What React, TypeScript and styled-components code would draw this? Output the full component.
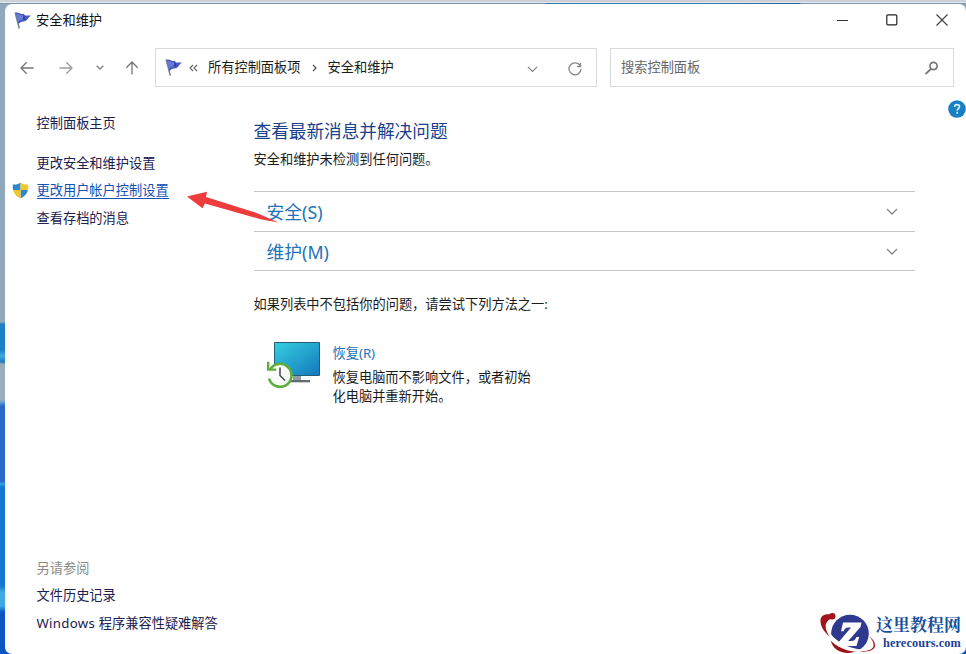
import React from "react";
import styled, { createGlobalStyle } from "styled-components";

const GlobalStyle = createGlobalStyle`
  * { box-sizing: border-box; }
  body { margin: 0; overflow: hidden; }
`;

const Desktop = styled.div`
  width: 966px;
  height: 654px;
  padding: 4px 0 0 5px;
  overflow: hidden;
  font: 13.22px/20px "Noto Sans", "Noto Sans CJK SC", sans-serif;
  color: #1b1b1b;
  background:
    linear-gradient(#cdd0d8 0 2px, #e4e9ef 2px 3px, transparent 3px) 0 0 / 100% 3px no-repeat,
    linear-gradient(90deg, #7f95a8 0 545px, #2f7fae 545px 700px, #2a5f9a 800px, #8497ad 801px) 0 3px / 100% 1px no-repeat,
    linear-gradient(
      #8fa8bd 0 200px, #93a9b8 322px, #1e7fc4 324px 350px, #43aadb 356px, #1f79c0 362px,
      #9aadb9 364px 400px, #63a3d0 402px, #2c66c8 406px 481px, #35a0e8 484px, #1577d3 487px 586px,
      #3fa9e2 592px 606px, #0d55c5 612px
    );
`;

const Window = styled.div`
  height: 650px;
  display: flex;
  flex-direction: column;
  background: #fff;
  border-radius: 7px;
  overflow: hidden;
`;

const TitleBar = styled.header`
  display: flex;
  align-items: center;
  height: 32px;
  padding: 0 17px 0 9px;
  color: #111;
`;

const Title = styled.h1`
  flex: 1;
  margin: 0 0 0 4px;
  font: inherit;
`;

const Controls = styled.div`
  display: flex;
  gap: 36px;
  align-items: center;
`;

const NavBar = styled.nav`
  display: flex;
  align-items: center;
  height: 39px;
  margin-top: 12px;
  padding: 0 12px 0 15px;
`;

const NavIcons = styled.div`
  display: flex;
  align-items: center;
  width: 135px;
  flex: none;
`;

const NavButton = styled.span<{ $width: number }>`
  display: flex;
  width: ${(p) => p.$width}px;
`;

const Field = styled.div<{ $width: number }>`
  display: flex;
  align-items: center;
  flex: none;
  width: ${(p) => p.$width}px;
  height: 39px;
  padding: 0 14px 0 9px;
  border: 1px solid #d9d9d9;
`;

const SearchField = styled(Field)`
  margin-left: 13px;
  padding: 0 14px 0 10px;
  color: #666;
  justify-content: space-between;
`;

const Crumb = styled.span`
  line-height: 20px;
  margin-top: -2px;
  white-space: nowrap;
`;

const CrumbMark = styled.span<{ $width: number }>`
  display: flex;
  justify-content: center;
  width: ${(p) => p.$width}px;
`;

const BackMark = styled(CrumbMark)`
  padding-right: 5px;
`;

const FieldTools = styled.span`
  display: flex;
  align-items: center;
  gap: 30px;
  margin-left: auto;
  padding-top: 3px;
`;

const Body = styled.div`
  flex: 1;
  display: flex;
`;

const Sidebar = styled.aside`
  width: 248.5px;
  flex: none;
  display: flex;
  flex-direction: column;
  padding: 22.5px 0 17.500px 7px;
  color: #20204f;
`;

const SideLink = styled.a<{ $active?: boolean; $muted?: boolean; $gap?: number }>`
  display: flex;
  align-items: center;
  height: 27.5px;
  margin-bottom: ${(p) => p.$gap ?? 0}px;
  padding-left: ${(p) => (p.$active ? 0 : 24.5)}px;
  white-space: pre;
  color: ${(p) => (p.$active ? "#1450b4" : p.$muted ? "#8b8b8b" : "inherit")};
`;

const Latin = styled.span`
  letter-spacing: 0.3px;
`;

const ShieldSlot = styled.span`
  display: flex;
  width: 24.5px;
`;

const Underlined = styled.span`
  border-bottom: 1px solid #1450b4;
  line-height: 16px;
`;

const Spacer = styled.div`
  flex: 1;
`;

const Main = styled.main`
  width: 661px;
  flex: none;
  padding-top: 32px;
`;

const Heading = styled.h2`
  margin: 0;
  font-size: 17.65px;
  line-height: 24px;
  font-weight: 400;
  color: #1a3f8c;
`;

const Status = styled.p`
  margin: 6px 0 22px;
`;

const Section = styled.div`
  display: flex;
  align-items: center;
  justify-content: space-between;
  height: 40px;
  padding: 1px 17px 0 13px;
  border-top: 1px solid #c8c8c8;
  font-size: 17.8px;
  color: #2273b8;
  &:nth-of-type(2) { height: 40px; border-bottom: 1px solid #c8c8c8; }
`;

const Hint = styled.p`
  margin: 23px 0 27px;
`;

const Recovery = styled.div`
  display: flex;
  gap: 12px;
  padding-left: 12px;
`;

const RecoveryText = styled.div`
  padding-top: 3px;
  line-height: 19px;
`;

const RecoveryLink = styled.a`
  display: block;
  margin-bottom: 5px;
  color: #2273b8;
`;

const Aside = styled.aside`
  flex: 1;
  display: flex;
  flex-direction: column;
  align-items: flex-end;
  justify-content: space-between;
  padding-top: 13px;
`;

const Brand = styled.div`
  display: flex;
  align-items: flex-start;
  width: 147px;
  height: 44px;
  margin-left: -200px;
`;

const BrandText = styled.div`
  display: flex;
  flex-direction: column;
  padding-top: 2px;
  white-space: nowrap;
`;

const BrandName = styled.strong`
  font: 700 17px/24px "Noto Serif CJK SC", "Noto Sans CJK SC", sans-serif;
  color: #164f9c;
`;

const BrandSite = styled.strong`
  padding-left: 7px;
  font: 700 12.3px/14px "Liberation Serif", serif;
  letter-spacing: 0.1px;
  color: #1c3f94;
`;

const Flag = () => (
  <svg width="18" height="19" viewBox="0 0 18 19">
    <path d="M1.300 2 5.200 17" stroke="#7180a0" strokeWidth="1.5" strokeLinecap="round" />
    <path d="M1.800 1.800C5 .5 6.500 4.200 10 2.700l-.1 1.300c2.300 1.200 4.200 0 7 .7-2.300 1-2.900 4-5.400 5.200-2.500 1-4.700-.2-7 3.400z" fill="#465bbd" />
    <path d="M2.300 3.200C5 2 6.200 5 9.400 4.100l-.8 4.700c-2-.3-3.200.3-4.400 1.700z" fill="#667cd6" />
    <path d="m10 2.700-1.300 5.900 3-.2z" fill="#3045a5" />
  </svg>
);

const Chevron = ({ size = 12, weight = 1.3 }: { size?: number; weight?: number }) => (
  <svg width={size} height={size * 0.6} viewBox="0 0 12 7.2" fill="none" stroke="#858585" strokeWidth={weight}>
    <path d="m1 1 5 5 5-5" />
  </svg>
);

const Arrow = ({ color, turn = 0 }: { color: string; turn?: number }) => (
  <svg width="14" height="14" viewBox="0 0 14 14" fill="none" stroke={color} strokeWidth="1.3">
    <path transform={`rotate(${turn} 7 7)`} d="M13.500 7H1M6.700 1.300 1 7l5.700 5.700" />
  </svg>
);

const Shield = () => (
  <svg width="17" height="17" viewBox="0 0 17 17">
    <defs>
      <clipPath id="shield">
        <path d="M8.500.5C6 2.400 3.500 2.600.8 2.500c-.5 6.900 1.600 11 7.700 14 6.100-3 8.200-7.100 7.700-14-2.700.1-5.200-.1-7.700-2z" />
      </clipPath>
    </defs>
    <g clipPath="url(#shield)">
      <path fill="#3088c8" d="M0 0h8.500v8H0zM8.500 8H17v9H8.500z" />
      <path fill="#f4c62d" d="M8.500 0H17v8H8.500zM0 8h8.500v9H0z" />
    </g>
  </svg>
);

const RecoveryIcon = () => (
  <svg width="55" height="49" viewBox="0 0 55 49">
    <defs>
      <linearGradient id="screen" x2="1" y2="1">
        <stop stopColor="#35cfe0" />
        <stop offset="1" stopColor="#1478bd" />
      </linearGradient>
    </defs>
    <path d="M27 34h8v6h-8z" fill="#929ca3" />
    <path d="M22 39h22v2.300H22z" fill="#606c75" />
    <path d="M8.500 1.500h45v33h-45z" fill="url(#screen)" stroke="#285c79" />
    <circle cx="14" cy="34.500" r="12" fill="#f8faf7" />
    <path d="M4.200 28.400A11.500 11.500 0 1 1 3 37.500" fill="none" stroke="#61ae3e" strokeWidth="2.600" />
    <path d="M2.200 20.800v7.800h8" fill="none" stroke="#61ae3e" strokeWidth="2.400" />
    <path d="M14 26.500v8l5 5" fill="none" stroke="#3f484c" strokeWidth="1.500" />
  </svg>
);

const BrandLogo = () => (
  <svg width="57" height="44" viewBox="0 0 57 44">
    <circle cx="31" cy="23.500" r="18.800" fill="#2f3990" />
    <path d="M11.500 29C16 34 26 38.500 39.500 40.500 28 46 13 42 11.500 29z" fill="#9c1018" />
    <path d="M8 9C5 19 14 28 23 33.500c8 4.500 17 6.500 24 6L40 42C24 41.500 13 34 8 26 3 18 3 11 8 9z" fill="#fff" />
    <circle cx="13.300" cy="6.300" r="3.200" fill="#a3141c" />
    <path d="M13 4.500C7.500 3.500 2 4.500 1.500 10c-.4 6.500 4 12.500 9.500 17C6 20 4 11.500 13 8.500z" fill="#a3141c" />
    <path d="M50.500 26.500C57.500 32 59.500 40 47 41.500c-3 .4-6 0-8.500-.7 5.500.6 11.500.5 14.500-2.300 3.300-3.200 1-7.500-2.500-12z" fill="#a3141c" />
    <path d="M24 12.500h18.500l-1 4.500-12.300 14h3.300c2.700 0 3.700-1.500 5-4h2.700L37.500 36H19l1.200-4.500L32 17.500h-2.800c-2.500 0-3.500 1.300-4.700 3.800H22z" fill="#fff" />
  </svg>
);

const Pointer = styled.svg`
  position: absolute;
  left: 186px;
  top: 190px;
`;

export default function App() {
  return (
    <Desktop>
      <GlobalStyle />
      <Window>
        <TitleBar>
          <Flag />
          <Title>安全和维护</Title>
          <Controls>
            <svg width="13" height="14" viewBox="0 0 13 14"><path d="M1 7.500h11" stroke="#333" strokeWidth="1.200" /></svg>
            <svg width="14" height="14" viewBox="0 0 14 14"><rect x="1.800" y="1.800" width="10" height="10" rx="1" fill="none" stroke="#222" strokeWidth="1.200" /></svg>
            <svg width="14" height="14" viewBox="0 0 14 14"><path d="m1.500 1.500 11 11m0-11-11 11" stroke="#444" strokeWidth="1.200" /></svg>
          </Controls>
        </TitleBar>
        <NavBar>
          <NavIcons>
            <NavButton $width={39}><Arrow color="#747474" /></NavButton>
            <NavButton $width={37}><Arrow color="#9b9b9b" turn={180} /></NavButton>
            <NavButton $width={29}><Chevron size={8} weight={2.2} /></NavButton>
            <NavButton $width={14}><Arrow color="#747474" turn={90} /></NavButton>
          </NavIcons>
          <Field $width={442}>
            <Flag />
            <BackMark $width={25}>
              <svg width="9" height="8" viewBox="0 0 9 8" fill="none" stroke="#666" strokeWidth="1.200"><path d="M4 1 1 4l3 3M8 1 5 4l3 3" /></svg>
            </BackMark>
            <Crumb>所有控制面板项</Crumb>
            <CrumbMark $width={27}>
              <svg width="5" height="8" viewBox="0 0 5 8" fill="none" stroke="#555" strokeWidth="1.300"><path d="m1 1 3 3-3 3" /></svg>
            </CrumbMark>
            <Crumb>安全和维护</Crumb>
            <FieldTools>
              <Chevron size={11} />
              <svg width="14" height="14" viewBox="0 0 14 14" fill="none" stroke="#888" strokeWidth="1.300">
                <path d="M12.300 4A6 6 0 1 0 13 7M12.500 1v3.500H9" />
              </svg>
            </FieldTools>
          </Field>
          <SearchField $width={344}>
            <Crumb>搜索控制面板</Crumb>
            <svg width="15" height="14" viewBox="0 0 15 14" fill="none" stroke="#777" strokeWidth="1.700">
              <circle cx="9.500" cy="5" r="3.600" /><path d="M7 8 1.500 13" />
            </svg>
          </SearchField>
        </NavBar>
        <Body>
          <Sidebar>
            <SideLink $gap={12}>控制面板主页</SideLink>
            <SideLink>更改安全和维护设置</SideLink>
            <SideLink $active><ShieldSlot><Shield /></ShieldSlot><Underlined>更改用户帐户控制设置</Underlined></SideLink>
            <SideLink>查看存档的消息</SideLink>
            <Spacer />
            <SideLink as="span" $muted>另请参阅</SideLink>
            <SideLink>文件历史记录</SideLink>
            <SideLink><Latin>Windows </Latin>程序兼容性疑难解答</SideLink>
          </Sidebar>
          <Main>
            <Heading>查看最新消息并解决问题</Heading>
            <Status>安全和维护未检测到任何问题。</Status>
            <Section>安全(S)<Chevron /></Section>
            <Section>维护(M)<Chevron /></Section>
            <Hint>如果列表中不包括你的问题，请尝试下列方法之一:</Hint>
            <Recovery>
              <RecoveryIcon />
              <RecoveryText>
                <RecoveryLink>恢复(R)</RecoveryLink>
                恢复电脑而不影响文件，或者初始<br />化电脑并重新开始。
              </RecoveryText>
            </Recovery>
          </Main>
          <Aside>
            <svg width="18" height="18" viewBox="0 0 19 19">
              <circle cx="9.500" cy="9.500" r="9.300" fill="#187fc5" />
              <path d="M7 7.300c0-3.300 5.200-3.100 5.200-.2 0 2-2.500 2-2.500 4M9.700 12.500v2" fill="none" stroke="#d9f2ff" strokeWidth="1.700" />
            </svg>
            <Brand>
              <BrandLogo />
              <BrandText>
                <BrandName>这里教程网</BrandName>
                <BrandSite>herecours.com</BrandSite>
              </BrandText>
            </Brand>
          </Aside>
        </Body>
      </Window>
      <Pointer width="96" height="34" viewBox="0 0 96 34">
        <path d="M1 6.500 21 1.800l-1 5.200L72 23.500 92.500 32.500l-18-3.300L19 13.500 16.500 18.200z" fill="#ee3b3b" />
      </Pointer>
    </Desktop>
  );
}
